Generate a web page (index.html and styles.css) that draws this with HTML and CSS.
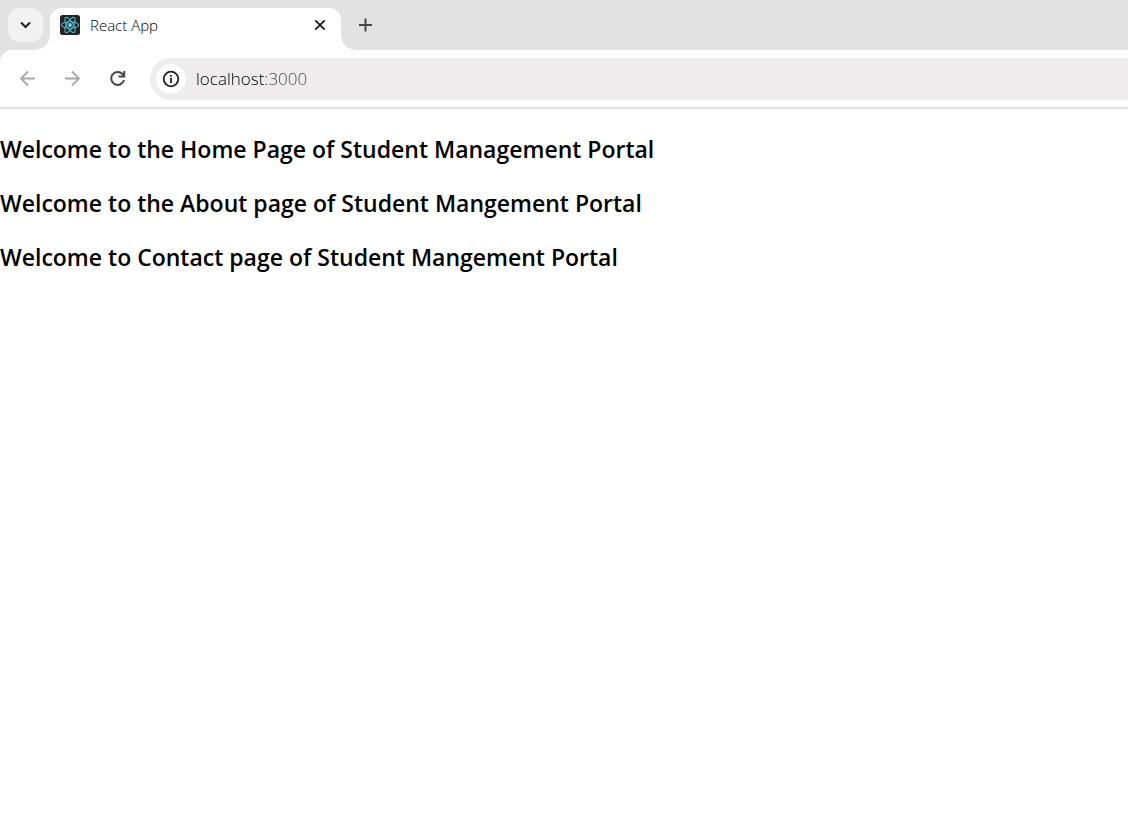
FILE: index.html
```html
<!DOCTYPE html>
<html lang="en">
<head>
<meta charset="utf-8">
<meta name="viewport" content="width=device-width, initial-scale=1">
<title>React App</title>
<link rel="stylesheet" href="styles.css">
</head>
<body>
<header class="browser">
  <div class="tab-strip">
    <button class="tab-search" type="button" aria-label="Search tabs">
      <svg width="14" height="14" viewBox="0 0 14 14" fill="none" stroke="#1f1f1f" stroke-width="2"><path d="M2 4.500 6.500 9 11 4.500"/></svg>
    </button>
    <div class="tab">
      <svg class="favicon" width="20" height="20" viewBox="0 0 20 20" fill="none" stroke="#58b4cc" stroke-width="1.100">
        <rect width="20" height="20" rx="2.500" fill="#222" stroke="none"/>
        <ellipse cx="10" cy="10" rx="8.600" ry="3.300"/>
        <ellipse cx="10" cy="10" rx="8.600" ry="3.300" transform="rotate(60 10 10)"/>
        <ellipse cx="10" cy="10" rx="8.600" ry="3.300" transform="rotate(120 10 10)"/>
        <circle cx="10" cy="10" r="1.900" fill="#61dafb" stroke="none"/>
      </svg>
      <span class="tab-title">React App</span>
      <button class="icon-button tab-close" type="button" aria-label="Close tab">
        <svg width="20" height="20" viewBox="0 0 20 20" fill="none" stroke="#1f1f1f" stroke-width="1.900"><path d="m5.300 5.300 9.400 9.400M14.700 5.300l-9.400 9.400"/></svg>
      </button>
    </div>
    <button class="icon-button new-tab" type="button" aria-label="New tab">
      <svg width="20" height="20" viewBox="0 0 20 20" fill="none" stroke="#474747" stroke-width="2"><path d="M10.500 3.500v13M4 10h13"/></svg>
    </button>
  </div>
  <div class="toolbar">
    <nav class="history">
      <button class="icon-button" type="button" aria-label="Back">
        <svg width="20" height="20" viewBox="0 0 20 20" fill="none" stroke="#a8a8a8" stroke-width="1.800"><path d="M17 9.500H3.500M10 2.500 3 9.500l7 7"/></svg>
      </button>
      <button class="icon-button" type="button" aria-label="Forward">
        <svg width="20" height="20" viewBox="0 0 20 20" fill="none" stroke="#a8a8a8" stroke-width="1.800"><path d="M2 9.500h13.500M9 2.500l7 7-7 7"/></svg>
      </button>
      <button class="icon-button" type="button" aria-label="Reload">
        <svg width="20" height="20" viewBox="0 0 20 20" fill="none" stroke="#474747" stroke-width="2"><path d="M16 11A6.500 6.500 0 1 1 14.500 5L15.800 6.700M16.200 2v5.500H10.500"/></svg>
      </button>
    </nav>
    <div class="omnibox">
      <button class="icon-button site-info" type="button" aria-label="View site information">
        <svg width="18" height="18" viewBox="0 0 18 18" fill="none" stroke="#1f1f1f" stroke-width="1.800"><circle cx="9" cy="9" r="7.300"/><path d="M9 8v5M9 4.900v1.900"/></svg>
      </button>
      <input class="address" type="text" value="localhost:3000" aria-label="Address" spellcheck="false">
    </div>
  </div>
</header>
<main class="page">
  <h2 class="page-heading">Welcome to the Home Page of Student Management Portal</h2>
  <h2 class="page-heading">Welcome to the About page of Student Mangement Portal</h2>
  <h2 class="page-heading">Welcome to Contact page of Student Mangement Portal</h2>
</main>
</body>
</html>
```
FILE: styles.css
```css
* {
  box-sizing: border-box;
}

body {
  margin: 0;
  background: #fff;
  color: #000;
  font-family: "Segoe UI", "Open Sans", "Noto Sans", sans-serif;
}

button {
  display: flex;
  align-items: center;
  justify-content: center;
  padding: 0;
  border: 0;
  background: none;
}

.browser {
  background: #e2e2e2;
}

.tab-strip {
  display: flex;
  gap: 7px;
  height: 50px;
  padding: 8px 8px 0;
}

.tab-search {
  width: 35px;
  height: 34px;
  border-radius: 12px;
  background: #f2f2f2;
}

.tab {
  position: relative;
  display: flex;
  align-items: center;
  gap: 10px;
  width: 291px;
  padding: 0 11px 8px 10px;
  border-radius: 12px 12px 0 0;
  background: #fff;
}

.tab::before,
.tab::after {
  content: "";
  position: absolute;
  bottom: 0;
  width: 14px;
  height: 14px;
}

.tab::before {
  right: 100%;
  background: radial-gradient(circle at 0 0, transparent 13px, #fff 14px);
}

.tab::after {
  left: 100%;
  background: radial-gradient(circle at 100% 0, transparent 13px, #fff 14px);
}

.tab-title {
  flex: 1;
  color: #000;
  font-size: 15px;
  font-weight: 340;
  line-height: 20px;
}

.icon-button {
  width: 20px;
  height: 20px;
}

.new-tab {
  width: 34px;
  height: 34px;
}

.toolbar {
  display: flex;
  align-items: center;
  gap: 22px;
  padding: 8px 0 7px 18px;
  border-bottom: 2px solid #e2e2e2;
  border-radius: 12px 0 0 0;
  background: #fff;
}

.history {
  display: flex;
  gap: 25px;
}

.omnibox {
  flex: 1;
  display: flex;
  align-items: center;
  gap: 10px;
  padding: 6px;
  border-radius: 21px 0 0 21px;
  background: #eeeced;
}

.site-info {
  width: 30px;
  height: 30px;
  border-radius: 50%;
  background: #fff;
}

.address {
  flex: 1;
  min-width: 0;
  padding: 0;
  border: 0;
  outline: 0;
  background: linear-gradient(to right, #000 70px, #444 70px) text;
  color: transparent;
  caret-color: #1f1f1f;
  font: 340 17px/24px "Segoe UI", "Open Sans", "Noto Sans", sans-serif;
}

.page {
  padding-top: 24px;
}

.page-heading {
  margin: 0 0 22px;
  font-size: 23px;
  font-weight: 620;
  line-height: 32px;
}
```
